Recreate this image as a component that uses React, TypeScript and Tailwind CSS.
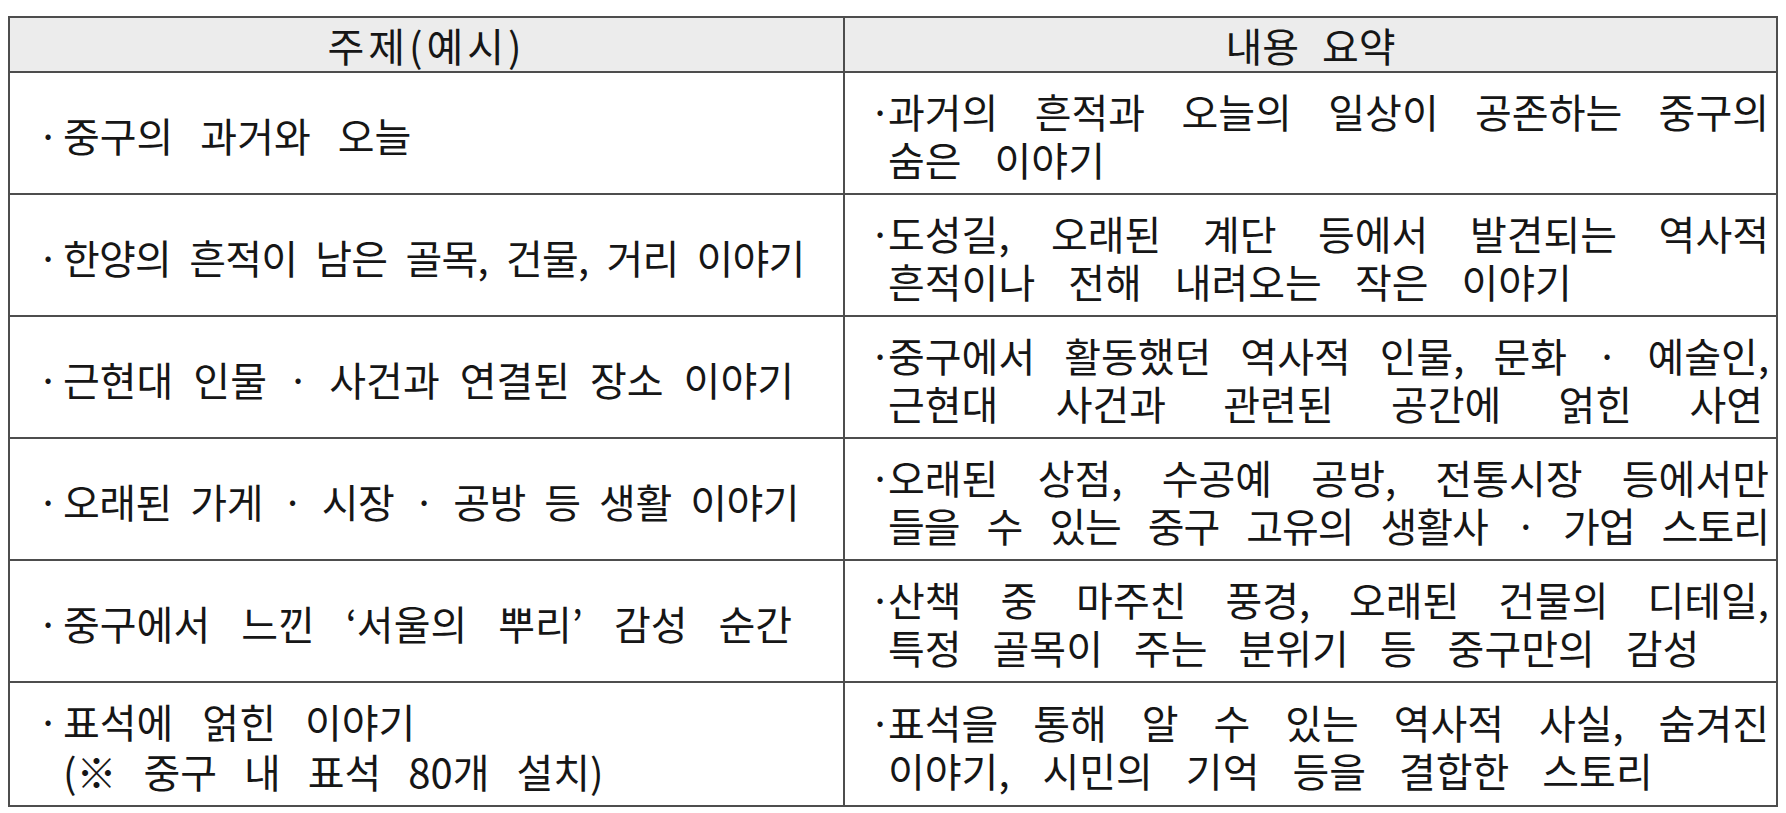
import React from "react";

type Line = { t: string; c?: string };
type Row = { left: Line[]; right: Line[] };

const J = "text-justify [text-align-last:justify]";

const rows: Row[] = [
  {
    left: [{ t: "중구의 과거와 오늘", c: "[word-spacing:18px]" }],
    right: [{ t: "과거의 흔적과 오늘의 일상이 공존하는 중구의", c: J }, { t: "숨은 이야기" }],
  },
  {
    left: [{ t: "한양의 흔적이 남은 골목, 건물, 거리 이야기", c: "tracking-[-0.8px] [word-spacing:10px]" }],
    right: [{ t: "도성길, 오래된 계단 등에서 발견되는 역사적", c: J }, { t: "흔적이나 전해 내려오는 작은 이야기" }],
  },
  {
    left: [{ t: "근현대 인물 · 사건과 연결된 장소 이야기", c: "[word-spacing:11px]" }],
    right: [
      { t: "중구에서 활동했던 역사적 인물, 문화 · 예술인,", c: `${J} [word-spacing:10px]` },
      { t: "근현대 사건과 관련된 공간에 얽힌 사연", c: `${J} pr-[6px]` },
    ],
  },
  {
    left: [{ t: "오래된 가게 · 시장 · 공방 등 생활 이야기", c: "tracking-[-0.5px] [word-spacing:10px]" }],
    right: [
      { t: "오래된 상점, 수공예 공방, 전통시장 등에서만", c: J },
      { t: "들을 수 있는 중구 고유의 생활사 · 가업 스토리", c: `tracking-[-1px] [word-spacing:10px] ${J}` },
    ],
  },
  {
    left: [{ t: "중구에서 느낀 ‘서울의 뿌리’ 감성 순간", c: "[word-spacing:22px]" }],
    right: [{ t: "산책 중 마주친 풍경, 오래된 건물의 디테일,", c: J }, { t: "특정 골목이 주는 분위기 등 중구만의 감성", c: "[word-spacing:22px]" }],
  },
  {
    left: [
      { t: "표석에 얽힌 이야기", c: "[word-spacing:20px]" },
      { t: "(※ 중구 내 표석 80개 설치)", c: "[word-spacing:18px]" },
    ],
    right: [{ t: "표석을 통해 알 수 있는 역사적 사실, 숨겨진", c: J }, { t: "이야기, 시민의 기억 등을 결합한 스토리" }],
  },
];

export default function App() {
  return (
    <div
      className="w-[1786px] h-[813px] bg-white text-[#161616] overflow-hidden pt-[16px] pl-[8px]"
      style={{ fontFamily: '"Noto Sans CJK KR", "Noto Sans", sans-serif' }}
    >
      <div className="w-[1770px] border-2 border-[#4d4d4d] grid grid-cols-[835px_1fr]">
        <div className="h-[55px] bg-[#ececec] border-r-2 border-b-2 border-[#4d4d4d] flex items-center justify-center text-[40px] leading-none tracking-[4px]">
          주제(예시)
        </div>
        <div className="h-[55px] bg-[#ececec] border-b-2 border-[#4d4d4d] flex items-center justify-center text-[40px] leading-none [word-spacing:14px]">
          내용 요약
        </div>
        {rows.map((r, i) => {
          const last = i === rows.length - 1;
          return (
            <React.Fragment key={i}>
              <div
                className={`h-[122px] border-r-2 border-[#4d4d4d] flex items-center pl-[27px] pt-[4px] text-[40px] leading-[50px] ${
                  last ? "" : "border-b-2"
                }`}
              >
                <div className="flex items-start">
                  <span className="w-[26px] shrink-0">·</span>
                  <div className="flex flex-col">
                    {r.left.map((l, j) => (
                      <div key={j} className={`whitespace-nowrap ${l.c ?? ""}`}>
                        {l.t}
                      </div>
                    ))}
                  </div>
                </div>
              </div>
              <div
                className={`h-[122px] border-[#4d4d4d] flex items-center pl-[24px] pr-[7px] pt-[4px] text-[40px] leading-[48px] ${
                  last ? "" : "border-b-2"
                }`}
              >
                <div className="flex items-start w-full">
                  <span className="w-[19px] shrink-0">·</span>
                  <div className="flex flex-col flex-1 min-w-0 [word-spacing:24px]">
                    {r.right.map((l, j) => (
                      <div key={j} className={`whitespace-nowrap ${l.c ?? ""}`}>
                        {l.t}
                      </div>
                    ))}
                  </div>
                </div>
              </div>
            </React.Fragment>
          );
        })}
      </div>
    </div>
  );
}
